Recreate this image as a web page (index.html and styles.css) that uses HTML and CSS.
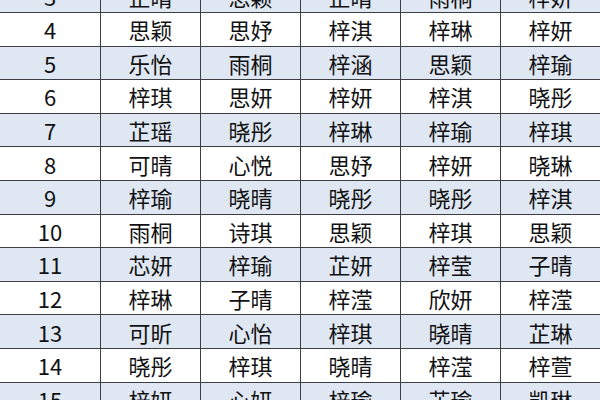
FILE: index.html
```html
<!DOCTYPE html>
<html lang="zh-CN">
<head>
<meta charset="utf-8">
<link rel="stylesheet" href="styles.css">
</head>
<body>
<div class="table">
  <div class="row odd"><div class="c">3</div><div class="c">芷晴</div><div class="c">思颖</div><div class="c">芷晴</div><div class="c">雨桐</div><div class="c">梓妍</div></div>
  <div class="row"><div class="c">4</div><div class="c">思颖</div><div class="c">思妤</div><div class="c">梓淇</div><div class="c">梓琳</div><div class="c">梓妍</div></div>
  <div class="row odd"><div class="c">5</div><div class="c">乐怡</div><div class="c">雨桐</div><div class="c">梓涵</div><div class="c">思颖</div><div class="c">梓瑜</div></div>
  <div class="row"><div class="c">6</div><div class="c">梓琪</div><div class="c">思妍</div><div class="c">梓妍</div><div class="c">梓淇</div><div class="c">晓彤</div></div>
  <div class="row odd"><div class="c">7</div><div class="c">芷瑶</div><div class="c">晓彤</div><div class="c">梓琳</div><div class="c">梓瑜</div><div class="c">梓琪</div></div>
  <div class="row"><div class="c">8</div><div class="c">可晴</div><div class="c">心悦</div><div class="c">思妤</div><div class="c">梓妍</div><div class="c">晓琳</div></div>
  <div class="row odd"><div class="c">9</div><div class="c">梓瑜</div><div class="c">晓晴</div><div class="c">晓彤</div><div class="c">晓彤</div><div class="c">梓淇</div></div>
  <div class="row"><div class="c">10</div><div class="c">雨桐</div><div class="c">诗琪</div><div class="c">思颖</div><div class="c">梓琪</div><div class="c">思颖</div></div>
  <div class="row odd"><div class="c">11</div><div class="c">芯妍</div><div class="c">梓瑜</div><div class="c">芷妍</div><div class="c">梓莹</div><div class="c">子晴</div></div>
  <div class="row"><div class="c">12</div><div class="c">梓琳</div><div class="c">子晴</div><div class="c">梓滢</div><div class="c">欣妍</div><div class="c">梓滢</div></div>
  <div class="row odd"><div class="c">13</div><div class="c">可昕</div><div class="c">心怡</div><div class="c">梓琪</div><div class="c">晓晴</div><div class="c">芷琳</div></div>
  <div class="row"><div class="c">14</div><div class="c">晓彤</div><div class="c">梓琪</div><div class="c">晓晴</div><div class="c">梓滢</div><div class="c">梓萱</div></div>
  <div class="row odd"><div class="c">15</div><div class="c">梓妍</div><div class="c">心妍</div><div class="c">梓瑜</div><div class="c">芷瑜</div><div class="c">凯琳</div></div>
</div>
</body>
</html>
```
FILE: styles.css
```css
html, body {
  margin: 0;
  padding: 0;
  width: 600px;
  height: 400px;
  overflow: hidden;
  background: #ffffff;
}
.table {
  margin-top: -20.6px;
  display: flex;
  flex-direction: column;
  gap: 1px;
  background: #3c3e44;
  width: 600px;
}
.row {
  display: grid;
  grid-template-columns: 100px repeat(5, 99px);
  gap: 1px;
  height: 32.6px;
}
.c {
  background: #ffffff;
  display: flex;
  align-items: center;
  justify-content: center;
  font-family: "Noto Sans CJK SC", "Noto Sans", sans-serif;
  font-size: 22px;
  font-weight: 400;
  color: #111113;
  line-height: 1;
}
.row.odd .c {
  background: #dfe7f2;
}
```
